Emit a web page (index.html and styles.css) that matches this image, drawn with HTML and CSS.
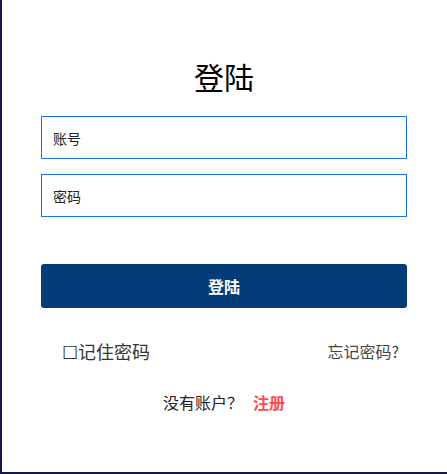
FILE: index.html
```html
<!DOCTYPE html>
<html>
<head>
	<meta charset="utf-8">
	<title>登陆</title>
<link rel="stylesheet" href="styles.css">
</head>
<body>

<div class="loginPage">
	<form class="loginForm" onsubmit="return false;">
		<h1 class="loginTitle">登陆</h1>
		<input class="loginField" type="text" placeholder="账号">
		<input class="loginField loginFieldLast" type="password" placeholder="密码">
		<button class="loginButton" type="submit">登陆</button>
		<div class="loginOptions">
			<span class="loginRemember">☐记住密码</span>
			<a class="loginForgot" href="#">忘记密码?</a>
		</div>
		<div class="loginRegister">没有账户？<a class="loginRegisterLink" href="#">注册</a></div>
	</form>
</div>

</body>
</html>
```

FILE: styles.css
```css
body {
	margin: 0;
	background-color: #fff;
	font-family: "Noto Sans CJK SC", "Noto Sans", sans-serif;
}
.loginPage {
	height: 474px;
	box-sizing: border-box;
	border-left: 2px solid #141a48;
	border-bottom: 2px solid #141a48;
	padding-left: 39px;
}
.loginForm {
	width: 366px;
	padding-top: 61px;
}
.loginTitle {
	margin: 0 0 25px 0;
	font-size: 30px;
	line-height: 30px;
	font-weight: normal;
	text-align: center;
	color: #000;
}
.loginField {
	display: block;
	width: 100%;
	height: 43px;
	box-sizing: border-box;
	margin: 0 0 15px 0;
	padding: 0 11px;
	border: 1px solid #1a73e8;
	border-radius: 0;
	outline: none;
	font-family: inherit;
	font-size: 14px;
	color: #222;
}
.loginField::placeholder {
	color: #222;
}
.loginFieldLast {
	margin-bottom: 47px;
}
.loginButton {
	display: block;
	width: 100%;
	height: 44px;
	border: none;
	border-radius: 3px;
	background-color: #043b79;
	color: #fff;
	font-family: inherit;
	font-size: 16px;
	font-weight: bold;
	cursor: pointer;
}
.loginOptions {
	display: flex;
	justify-content: space-between;
	margin-top: 33px;
	padding: 0 8px 0 21px;
	line-height: 20px;
}
.loginRemember {
	font-size: 18px;
	color: #333;
}
.loginForgot {
	font-size: 16px;
	color: #444;
	text-decoration: none;
}
.loginRegister {
	margin-top: 31px;
	font-size: 16px;
	line-height: 20px;
	text-align: center;
	color: #222;
}
.loginRegisterLink {
	margin-left: 10px;
	color: #ff4a4f;
	font-weight: bold;
	text-decoration: none;
}
```
